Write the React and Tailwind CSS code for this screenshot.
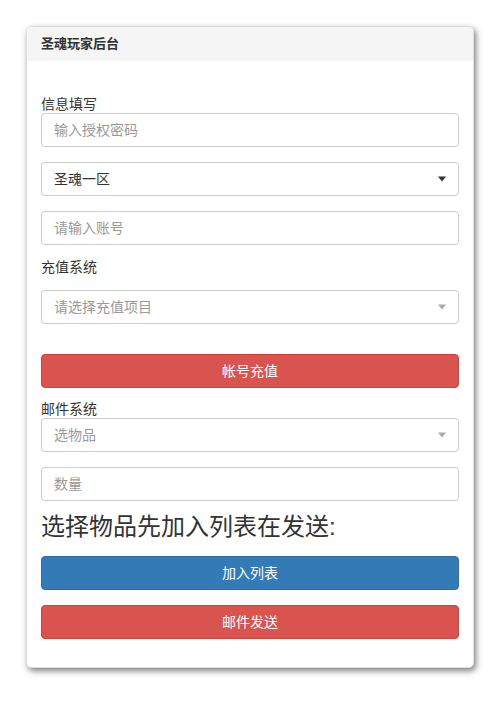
const FONT = "font-['Liberation_Sans','Noto_Sans_CJK_SC',sans-serif]";

const Caret = ({ dark }) => (
  <span
    className={`absolute right-[12px] top-1/2 -translate-y-1/2 w-0 h-0 border-x-[4px] border-x-transparent border-t-[5px] ${
      dark ? "border-t-[#333]" : "border-t-[#aaa]"
    }`}
  />
);

const Input = ({ placeholder }) => (
  <input
    placeholder={placeholder}
    className="block w-full h-[34px] px-3 text-[14px] text-[#555] border border-[#ccc] rounded-[4px] outline-none placeholder:text-[#999]"
  />
);

const Select = ({ value, placeholder }) => (
  <div className="relative w-full h-[34px] px-3 border border-[#ccc] rounded-[4px] flex items-center text-[14px]">
    {value ? (
      <span className="text-[#333]">{value}</span>
    ) : (
      <span className="text-[#999]">{placeholder}</span>
    )}
    <Caret dark={!!value} />
  </div>
);

const Button = ({ children, color }) => (
  <button
    className={`block w-full h-[34px] rounded-[4px] border text-[14px] text-white ${
      color === "blue"
        ? "bg-[#337ab7] border-[#2e6da4]"
        : "bg-[#d9534f] border-[#d43f3a]"
    }`}
  >
    {children}
  </button>
);

export default function App() {
  return (
    <div className={`${FONT} w-[500px] h-[702px] bg-white pt-[26px] pl-[26px]`}>
      <div className="w-[448px] bg-white rounded-[5px] border border-[#ddd] shadow-[2px_3px_6px_rgba(0,0,0,0.5)] overflow-hidden">
        <div className="h-[34px] bg-[#f5f5f5] px-[14px] flex items-center text-[13px] font-bold text-[#333]">
          圣魂玩家后台
        </div>

        <div className="px-[14px] pt-[34px] pb-[28px]">
          <div className="text-[14px] leading-[18px] text-[#333]">信息填写</div>
          <Input placeholder="输入授权密码" />

          <div className="mt-[15px]">
            <Select value="圣魂一区" />
          </div>

          <div className="mt-[15px]">
            <Input placeholder="请输入账号" />
          </div>

          <div className="mt-[12px] mb-[13px] text-[14px] leading-[20px] text-[#333]">充值系统</div>
          <Select placeholder="请选择充值项目" />

          <div className="mt-[30px]">
            <Button>帐号充值</Button>
          </div>

          <div className="mt-[13px] text-[14px] leading-[17px] text-[#333]">邮件系统</div>
          <Select placeholder="选物品" />

          <div className="mt-[15px]">
            <Input placeholder="数量" />
          </div>

          <div className="mt-[13px] mb-[16px] text-[24px] leading-[26px] text-[#333]">
            选择物品先加入列表在发送:
          </div>

          <Button color="blue">加入列表</Button>

          <div className="mt-[15px]">
            <Button>邮件发送</Button>
          </div>
        </div>
      </div>
    </div>
  );
}
